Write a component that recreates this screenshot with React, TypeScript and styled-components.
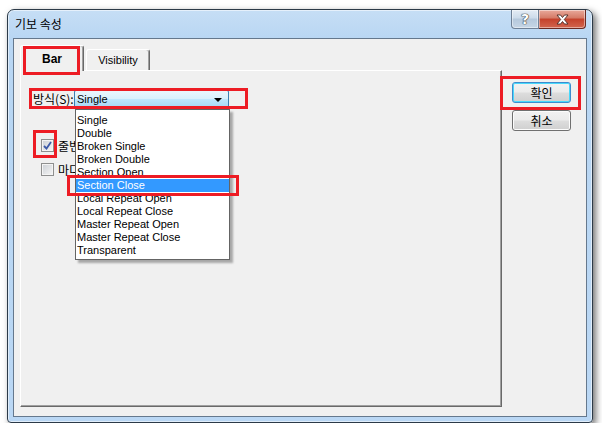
import styled, { createGlobalStyle } from "styled-components";

const GlobalStyle = createGlobalStyle`
  html, body { margin: 0; padding: 0; background: #fff; }
  body { font-family: "Liberation Sans", "Noto Sans CJK KR", sans-serif; font-size: 11px; color: #000; }
`;

const KR = `"Noto Sans CJK KR", "Liberation Sans", sans-serif`;

const Window = styled.div`
  margin: 9px 0 0 7px;
  width: 586px;
  height: 414px;
  box-sizing: border-box;
  border: 1px solid #2c3a48;
  border-radius: 7px 7px 4px 4px;
  background: linear-gradient(#c6def5, #b8d6f3 30px, #bad7f4);
  box-shadow: 3px 3px 7px rgba(0, 0, 0, 0.55), inset 0 0 0 1px rgba(255, 255, 255, 0.55);
  padding: 0 5px 5px;
  display: flex;
  flex-direction: column;
`;

const TitleBar = styled.div`
  height: 28px;
  display: flex;
  align-items: flex-start;
  justify-content: space-between;
`;

const Title = styled.div`
  padding: 6px 0 0 2px;
  font: 12px/16px ${KR};
`;

const CaptionButtons = styled.div`
  display: flex;
  margin-right: 1px;
`;

const CaptionButton = styled.div<{ $close?: boolean }>`
  width: ${(p) => (p.$close ? 47 : 28)}px;
  height: 19px;
  box-sizing: border-box;
  display: flex;
  align-items: center;
  justify-content: center;
  border: 1px solid ${(p) => (p.$close ? "#6b2a22" : "#6e8096")};
  border-top: none;
  border-radius: ${(p) => (p.$close ? "0 0 4px 0" : "0 0 0 4px")};
  ${(p) => (p.$close ? "border-left: none;" : "")}
  background: ${(p) =>
    p.$close
      ? "linear-gradient(#e9a99b, #d47a66 45%, #c4412b 50%, #d2664f)"
      : "linear-gradient(#e4ecf5, #ccdbea 45%, #b5c8dc 50%, #c6d6e6)"};
  box-shadow: inset 0 0 0 1px rgba(255, 255, 255, 0.45);
  color: #fff;
  font: bold 14px/1 "DejaVu Sans", sans-serif;
  text-shadow: 0 0 1px #333, 0 0 1px #333, 0 0 1px #333;
`;

const Client = styled.div`
  flex: 1;
  display: flex;
  border: 1px solid #65788d;
  background: #f0f0f0;
`;

const Main = styled.div`
  margin: 6px 0 0 6px;
  width: 482px;
  display: flex;
  flex-direction: column;
`;

const TabRow = styled.div`
  height: 25px;
  display: flex;
  align-items: flex-end;
`;

const Tab = styled.div<{ $active?: boolean }>`
  position: relative;
  box-sizing: border-box;
  width: 64px;
  height: ${(p) => (p.$active ? 26 : 21)}px;
  margin: ${(p) => (p.$active ? "0 0 -1px 0" : "0 0 0 2px")};
  z-index: ${(p) => (p.$active ? 2 : 0)};
  background: #f0f0f0;
  border-top: 1px solid #fff;
  border-left: 1px solid #fff;
  border-right: 1px solid #696969;
  box-shadow: inset -1px 0 #a0a0a0;
  border-radius: 3px 3px 0 0;
  display: flex;
  align-items: center;
  justify-content: center;
  font-family: "Liberation Sans", sans-serif;
  font-size: ${(p) => (p.$active ? 12 : 11)}px;
  font-weight: ${(p) => (p.$active ? "bold" : "normal")};
  padding-top: ${(p) => (p.$active ? 1 : 0)}px;
`;

const Panel = styled.div`
  position: relative;
  width: 482px;
  height: 337px;
  box-sizing: border-box;
  border-top: 1px solid #fff;
  border-left: 1px solid #fff;
  border-right: 1px solid #696969;
  border-bottom: 1px solid #696969;
  box-shadow: inset -1px -1px #a0a0a0;
  padding: 19px 0 0 12px;
`;

const ComboRow = styled.div`
  position: relative;
  display: flex;
  align-items: center;
  height: 18px;
`;

const FieldLabel = styled.span`
  width: 41px;
  font: 12px/18px ${KR};
  white-space: nowrap;
`;

const Combo = styled.div`
  position: relative;
  width: 155px;
  height: 18px;
  box-sizing: border-box;
  border: 1px solid #3c7fb1;
  border-radius: 2px;
  background: linear-gradient(#eaf6fd, #d9f0fc 48%, #bee6fd 52%, #a7d9f5);
  padding-left: 2px;
  font-size: 11px;
  line-height: 16px;
`;

const Arrow = styled.span`
  position: absolute;
  right: 6px;
  top: 7px;
  border-left: 4px solid transparent;
  border-right: 4px solid transparent;
  border-top: 4px solid #000;
`;

const DropList = styled.div`
  position: absolute;
  left: 0;
  top: 18px;
  width: 155px;
  box-sizing: border-box;
  border: 1px solid #646464;
  background: #fff;
  box-shadow: 3px 3px 2px rgba(0, 0, 0, 0.3);
  padding: 4px 0 2px;
  z-index: 5;
`;

const DropItem = styled.div<{ $selected?: boolean }>`
  position: relative;
  height: 13px;
  line-height: 13px;
  padding-left: 1px;
  font-size: 11px;
  white-space: nowrap;
  background: ${(p) => (p.$selected ? "#3399ff" : "transparent")};
  color: ${(p) => (p.$selected ? "#fff" : "#000")};
`;

const CheckList = styled.div`
  margin: 31px 0 0 8px;
  display: flex;
  flex-direction: column;
  gap: 11px;
`;

const CheckRow = styled.div`
  position: relative;
  display: flex;
  align-items: center;
  gap: 4px;
  height: 13px;
`;

const Box = styled.span`
  width: 13px;
  height: 13px;
  box-sizing: border-box;
  border: 1px solid #8e8f8f;
  background: linear-gradient(135deg, #cbcfd5, #f6f6f6);
  box-shadow: inset 0 0 0 1px #f4f4f4;
  display: flex;
  align-items: center;
  justify-content: center;
`;

const CheckText = styled.span`
  font: 12px/13px ${KR};
`;

const Side = styled.div`
  margin: 43px 0 0 10px;
  display: flex;
  flex-direction: column;
  gap: 7px;
`;

const Button = styled.div<{ $default?: boolean }>`
  position: relative;
  width: 59px;
  height: 21px;
  box-sizing: border-box;
  border: 1px solid ${(p) => (p.$default ? "#3c8ccf" : "#707070")};
  border-radius: 3px;
  background: linear-gradient(#f2f2f2, #ebebeb 48%, #dddddd 52%, #cfcfcf);
  box-shadow: inset 0 0 0 1px ${(p) => (p.$default ? "#48d8fb" : "#fcfcfc")};
  display: flex;
  align-items: center;
  justify-content: center;
  font: 12px/1 ${KR};
`;

const Mark = styled.div<{ $l: number; $t: number; $w: number; $h: number }>`
  position: absolute;
  left: ${(p) => p.$l}px;
  top: ${(p) => p.$t}px;
  width: ${(p) => p.$w}px;
  height: ${(p) => p.$h}px;
  box-sizing: border-box;
  border: 3px solid #ed1c24;
  pointer-events: none;
  z-index: 10;
`;

const options = [
  "Single",
  "Double",
  "Broken Single",
  "Broken Double",
  "Section Open",
  "Section Close",
  "Local Repeat Open",
  "Local Repeat Close",
  "Master Repeat Open",
  "Master Repeat Close",
  "Transparent",
];

const Check = () => (
  <svg width="9" height="9" viewBox="0 0 9 9">
    <path d="M1 5 L3.5 7.5 L8 1" fill="none" stroke="#3d5aa8" strokeWidth="1.8" />
  </svg>
);

const CloseGlyph = () => (
  <svg width="13" height="11" viewBox="0 0 13 11">
    <path
      d="M1 1 H4.5 L6.5 3.5 L8.5 1 H12 L8.3 5.5 L12 10 H8.5 L6.5 7.5 L4.5 10 H1 L4.7 5.5 Z"
      fill="#fff"
      stroke="#4a2a25"
      strokeWidth="0.9"
    />
  </svg>
);

export default function App() {
  return (
    <>
      <GlobalStyle />
      <Window>
        <TitleBar>
          <Title>기보 속성</Title>
          <CaptionButtons>
            <CaptionButton>?</CaptionButton>
            <CaptionButton $close>
              <CloseGlyph />
            </CaptionButton>
          </CaptionButtons>
        </TitleBar>
        <Client>
          <Main>
            <TabRow>
              <Tab $active>
                Bar
                <Mark $l={2} $t={0} $w={57} $h={29} />
              </Tab>
              <Tab>Visibility</Tab>
            </TabRow>
            <Panel>
              <ComboRow>
                <Mark $l={-4} $t={-2} $w={219} $h={21} />
                <FieldLabel>방식(S):</FieldLabel>
                <Combo>
                  Single
                  <Arrow />
                  <DropList>
                    {options.map((o) => (
                      <DropItem key={o} $selected={o === "Section Close"}>
                        {o}
                        {o === "Section Close" && <Mark $l={-9} $t={-4} $w={172} $h={21} />}
                      </DropItem>
                    ))}
                  </DropList>
                </Combo>
              </ComboRow>
              <CheckList>
                <CheckRow>
                  <Mark $l={-8} $t={-9} $w={24} $h={28} />
                  <Box>
                    <Check />
                  </Box>
                  <CheckText>줄번호 표시</CheckText>
                </CheckRow>
                <CheckRow>
                  <Box />
                  <CheckText>마디 번호 표시</CheckText>
                </CheckRow>
              </CheckList>
            </Panel>
          </Main>
          <Side>
            <Button $default>
              확인
              <Mark $l={-13} $t={-7} $w={81} $h={34} />
            </Button>
            <Button>취소</Button>
          </Side>
        </Client>
      </Window>
    </>
  );
}
